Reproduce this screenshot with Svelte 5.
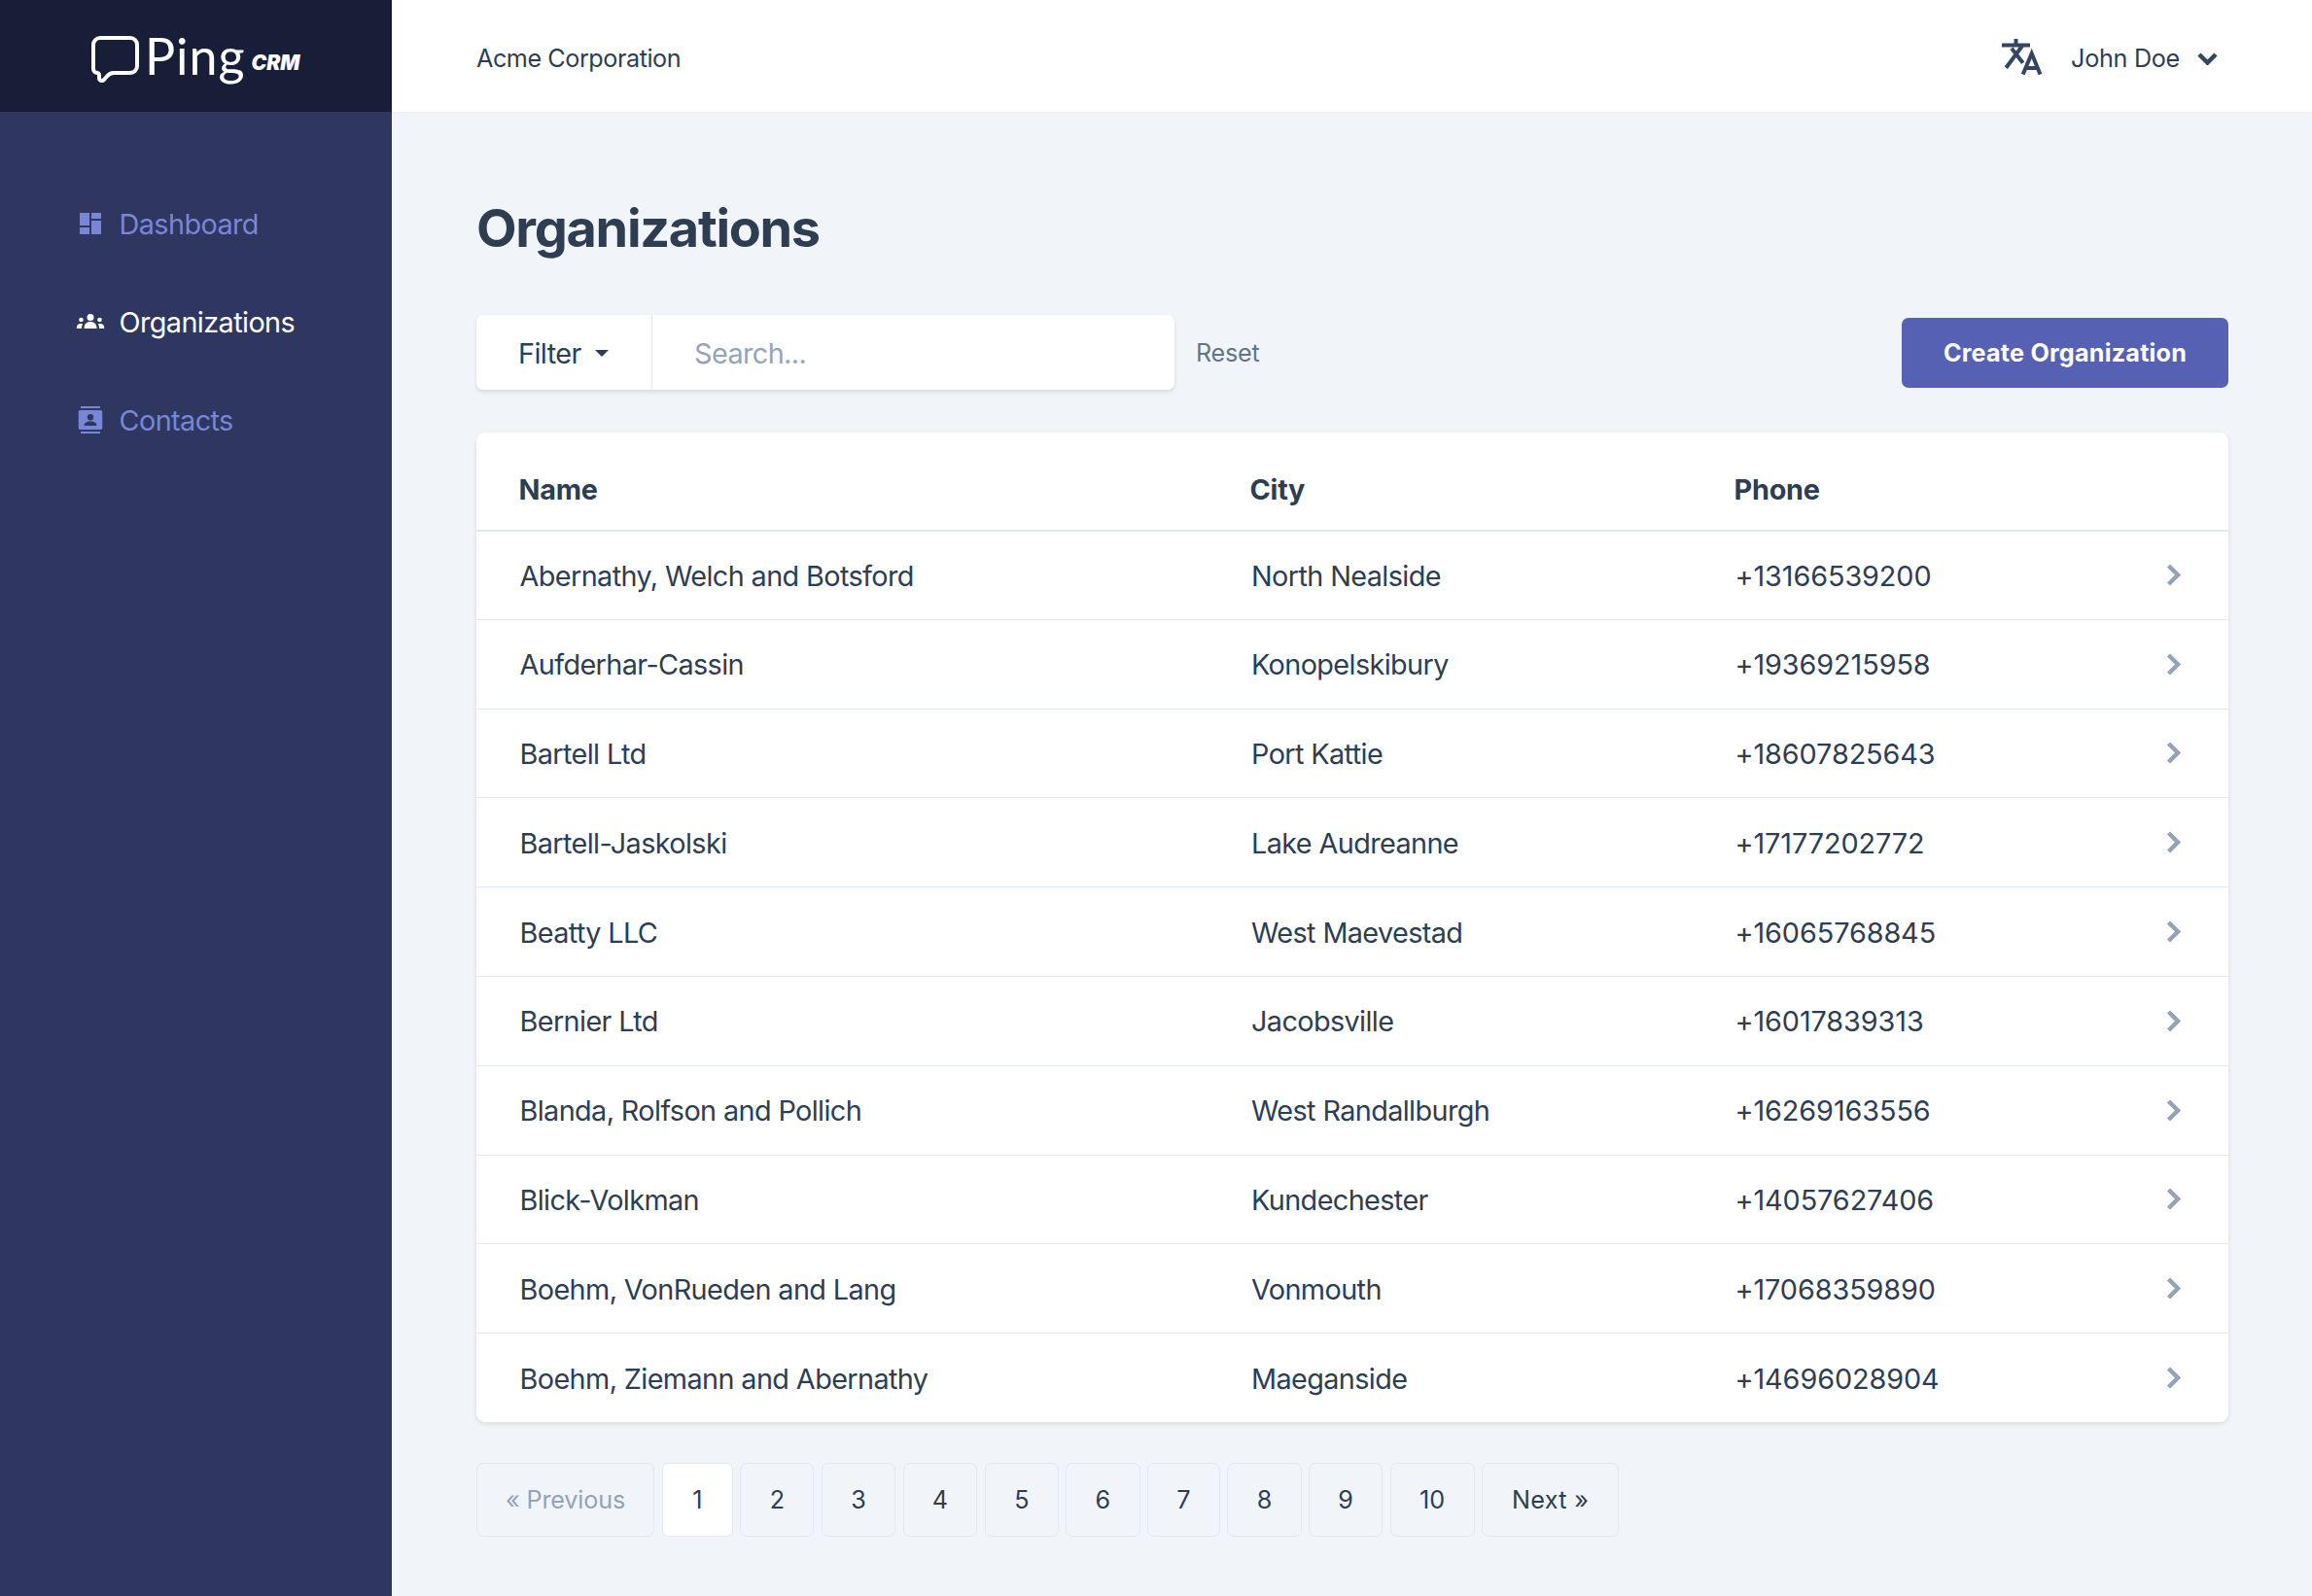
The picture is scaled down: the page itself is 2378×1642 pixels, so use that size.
<script>
  const rows = [
    ['Abernathy, Welch and Botsford', 'North Nealside', '+13166539200'],
    ['Aufderhar-Cassin', 'Konopelskibury', '+19369215958'],
    ['Bartell Ltd', 'Port Kattie', '+18607825643'],
    ['Bartell-Jaskolski', 'Lake Audreanne', '+17177202772'],
    ['Beatty LLC', 'West Maevestad', '+16065768845'],
    ['Bernier Ltd', 'Jacobsville', '+16017839313'],
    ['Blanda, Rolfson and Pollich', 'West Randallburgh', '+16269163556'],
    ['Blick-Volkman', 'Kundechester', '+14057627406'],
    ['Boehm, VonRueden and Lang', 'Vonmouth', '+17068359890'],
    ['Boehm, Ziemann and Abernathy', 'Maeganside', '+14696028904']
  ];
  const pages = ['2', '3', '4', '5', '6', '7', '8', '9', '10'];
</script>

<div class="shell">
  <aside class="side">
    <div class="brand">
      <svg class="bubble" viewBox="0 0 52 50" aria-hidden="true">
        <path d="M11 3h31a7 7 0 0 1 7 7v22a7 7 0 0 1-7 7H25c-3 0-5 1-7 3.500l-3 3.500c-2 2-5 1-5-2v-3c0-1-1-2-2-2a4 4 0 0 1-4-4V10a7 7 0 0 1 7-7z" />
      </svg>
      <span class="ping">Ping</span>
      <span class="crm">CRM</span>
    </div>
    <nav class="nav">
      <a class="item" href="#d">
        <svg class="ico" viewBox="0 0 22 22" aria-hidden="true"><path d="M0 0h10v13H0zM0 15h10v7H0zM12 0h10v6H12zM12 8h10v14H12z" /></svg>
        <span>Dashboard</span>
      </a>
      <a class="item on" href="#o">
        <svg class="ico" viewBox="0 0 29 16" aria-hidden="true">
          <circle cx="14.500" cy="3.500" r="3.500" /><path d="M8 15c0-4.500 2.500-7 6.500-7s6.500 2.500 6.500 7z" />
          <circle cx="5" cy="6" r="2.300" /><path d="M0 15c0-3 1.500-5 4.500-5 1 0 1.500 0 2 .5-.7 1.200-1 2.800-1 4.500z" />
          <circle cx="24" cy="6" r="2.300" /><path d="M29 15c0-3-1.500-5-4.500-5-1 0-1.500 0-2 .5.700 1.200 1 2.800 1 4.500z" />
        </svg>
        <span>Organizations</span>
      </a>
      <a class="item" href="#c">
        <svg class="ico" viewBox="0 0 25 28" aria-hidden="true">
          <path d="M2.500 0h20v2h-20zM2.500 26h20v2h-20zM2 4h21a2 2 0 0 1 2 2v16a2 2 0 0 1-2 2H2a2 2 0 0 1-2-2V6a2 2 0 0 1 2-2zm10.500 4a3.200 3.200 0 1 0 0 6.400 3.200 3.200 0 0 0 0-6.400zM6 20h13c0-2.800-2.500-4.500-6.500-4.500S6 17.200 6 20z" fill-rule="evenodd" />
        </svg>
        <span>Contacts</span>
      </a>
    </nav>
  </aside>

  <div class="col">
    <header class="top">
      <span class="org">Acme Corporation</span>
      <div class="user">
        <svg class="lang" viewBox="0 0 41 37" aria-hidden="true">
          <path d="M0 6.500h29M14.500 0v6.500M4.300 29.700 21.700 6.300M10 9.700l11.700 15M21.700 36.500l9-21.500 8.800 21.500M24 30h13" />
        </svg>
        <span class="name">John Doe</span>
        <svg class="caret" viewBox="0 0 21 13" aria-hidden="true"><path d="M2 2l8.500 8.500L19 2" /></svg>
      </div>
    </header>

    <main class="main">
      <h1>Organizations</h1>
      <div class="tools">
        <div class="searchbox">
          <div class="filter"><span>Filter</span><i class="tri"></i></div>
          <div class="search">Search...</div>
        </div>
        <span class="reset">Reset</span>
        <a class="create" href="#n">Create Organization</a>
      </div>

      <div class="card">
        <table>
          <colgroup><col class="c1" /><col class="c2" /><col class="c3" /><col /></colgroup>
          <thead><tr><th>Name</th><th>City</th><th colspan="2">Phone</th></tr></thead>
          <tbody>
            {#each rows as r}
              <tr>
                <td>{r[0]}</td><td class="city">{r[1]}</td><td class="tel">{r[2]}</td>
                <td class="arrow"><svg viewBox="0 0 15 23" aria-hidden="true"><path d="M2.500 2l9.500 9.500-9.500 9.500" /></svg></td>
              </tr>
            {/each}
          </tbody>
        </table>
      </div>

      <div class="pager">
        <span class="pg off">« Previous</span>
        <span class="pg cur">1</span>
        {#each pages as p}<span class="pg num">{p}</span>{/each}
        <span class="pg next">Next »</span>
      </div>
    </main>
  </div>
</div>

<style>
  :global(body) { margin: 0; background: #f1f5f9; }
  .shell {
    display: grid;
    grid-template-columns: 403px 1fr;
    height: 1642px;
    overflow: hidden;
    font-family: Inter, "Liberation Sans", sans-serif;
    color: #2f3d52;
  }
  .side { background: #2f365f; }
  .brand {
    height: 115px;
    background: #191e38;
    display: flex;
    align-items: flex-start;
    box-sizing: border-box;
    padding-left: 92px;
    color: #fff;
  }
  .bubble { width: 52px; height: 50px; margin-top: 36px; fill: none; stroke: #fff; stroke-width: 4; }
  .ping {
    font-family: Lato, sans-serif;
    font-weight: 400;
    font-size: 52px;
    line-height: 50px;
    margin: 32px 0 0 5px;
    letter-spacing: 1px;
  }
  .crm {
    font-family: Inter, sans-serif;
    font-weight: 900;
    font-style: italic;
    font-size: 21px;
    line-height: 22px;
    margin: 54px 0 0 6px;
  }
  .nav { display: flex; flex-direction: column; gap: 29px; padding-top: 79px; }
  .item {
    display: flex;
    align-items: center;
    height: 72px;
    position: relative;
    padding-left: 122.500px;
    color: #7886d7;
    font-size: 28.800px;
    letter-spacing: -0.02em;
    text-decoration: none;
  }
  .item.on { color: #fff; }
  .ico {
    position: absolute;
    left: 93px;
    top: 50%;
    transform: translate(-50%, -50%);
    fill: #7886d7;
    width: 24px;
    height: 24px;
  }
  .item:nth-child(1) .ico { width: 22px; height: 22px; }
  .item:nth-child(2) .ico { width: 29px; height: 16px; fill: #fff; }
  .item:nth-child(3) .ico { width: 25px; height: 28px; }

  .col { display: flex; flex-direction: column; min-width: 0; }
  .top {
    height: 115px;
    flex: none;
    box-sizing: border-box;
    background: #fff;
    display: flex;
    align-items: center;
    justify-content: space-between;
    padding: 5px 97px 0 87px;
    box-shadow: 0 1px 2px rgba(0, 0, 0, .04);
    font-size: 25.200px;
  }
  .org { letter-spacing: -0.018em; }
  .user { display: flex; align-items: center; }
  .lang { width: 41px; height: 37px; margin-top: -4px; fill: none; stroke: #34465f; stroke-width: 4; }
  .name { margin-left: 30px; letter-spacing: -0.012em; }
  .caret { width: 21px; height: 13px; margin-left: 18px; fill: none; stroke: #34465f; stroke-width: 4.500; }

  .main { padding: 0 86px 0 87px; }
  h1 { margin: 0; font-size: 54px; line-height: 65px; font-weight: 700; padding-top: 87px; letter-spacing: -0.024em; }
  .tools { display: flex; align-items: center; margin-top: 57px; }
  .searchbox {
    width: 718px;
    height: 77px;
    display: flex;
    background: #fff;
    border-radius: 7px;
    box-shadow: 0 2px 4px rgba(0, 0, 0, .12);
    font-size: 28.800px;
    letter-spacing: -0.02em;
  }
  .filter {
    width: 181px;
    flex: none;
    box-sizing: border-box;
    padding: 2px 0 0 43px;
    display: flex;
    align-items: center;
    border-right: 1px solid #e2e8f0;
  }
  .tri {
    width: 0; height: 0;
    margin-left: 14px;
    border: 7.500px solid transparent;
    border-top: 7.500px solid #2f3d52;
    border-bottom: 0;
  }
  .search { padding: 2px 0 0 43px; display: flex; align-items: center; color: #94a3b8; }
  .reset { margin-left: 22px; font-size: 25.200px; color: #64748b; letter-spacing: -0.01em; }
  .create {
    margin-left: auto;
    width: 336px;
    height: 72px;
    display: flex;
    align-items: center;
    justify-content: center;
    background: #5661b3;
    color: #fff;
    font-weight: 700;
    font-size: 25.200px;
    letter-spacing: 0.008em;
    border-radius: 7px;
    text-decoration: none;
  }
  .card {
    margin-top: 43.500px;
    background: #fff;
    border-radius: 9px;
    box-shadow: 0 2px 5px rgba(0, 0, 0, .1);
    overflow: hidden;
  }
  table { width: 100%; border-collapse: collapse; table-layout: fixed; font-size: 28.800px; }
  .c1 { width: 752px; }
  .c2 { width: 498px; }
  .c3 { width: 400px; }
  th { text-align: left; font-weight: 700; height: 101px; padding: 18px 0 0 43.500px; border-bottom: 2px solid #e2e8f0; box-sizing: border-box; letter-spacing: -0.008em; }
  td { height: 91.800px; padding: 1px 0 0 44.500px; box-sizing: border-box; border-top: 1.500px solid #e2e8f0; letter-spacing: -0.021em; }
  td.city { padding-left: 45px; }
  td.tel { letter-spacing: -0.003em; }
  tbody tr:first-child td { border-top: 0; }
  .arrow { padding: 0; }
  .arrow svg { display: block; width: 15px; height: 23px; margin-left: 88px; fill: none; stroke: #94a3b8; stroke-width: 4.500; }

  .pager { display: flex; gap: 7.500px; margin-top: 42px; font-size: 25.200px; }
  .pg {
    height: 76px;
    box-sizing: border-box;
    padding: 0 29px;
    display: flex;
    align-items: center;
    border: 1.500px solid #e2e8f0;
    border-radius: 7px;
  }
  .num { padding: 0 29.300px; }
  .off { color: #94a3b8; letter-spacing: -0.006em; }
  .cur { background: #fff; padding: 0 30.500px; }
  .next { letter-spacing: 0.012em; padding: 0 30px; }
</style>
